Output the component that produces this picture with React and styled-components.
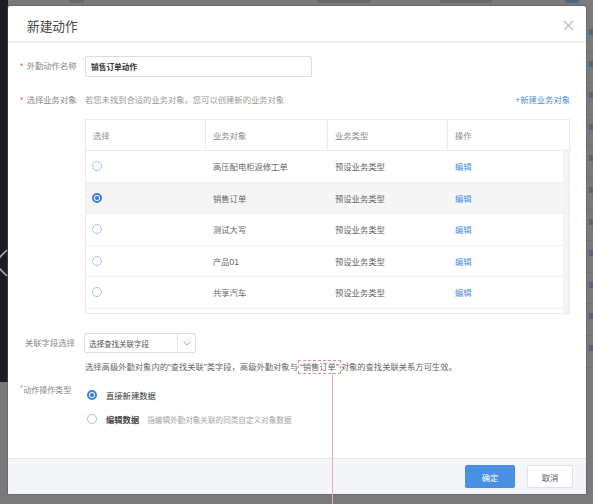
import React from "react";
import styled, { createGlobalStyle } from "styled-components";

const GlobalStyle = createGlobalStyle`
  html, body {
    margin: 0;
    padding: 0;
    background: #7a7a7a;
    font-family: "Liberation Sans", "Noto Sans CJK SC", sans-serif;
  }
  * {
    box-sizing: border-box;
  }
`;

const rows = [
  { name: "高压配电柜返修工单", type: "预设业务类型", checked: false },
  { name: "销售订单", type: "预设业务类型", checked: true },
  { name: "测试大写", type: "预设业务类型", checked: false },
  { name: "产品01", type: "预设业务类型", checked: false },
  { name: "共享汽车", type: "预设业务类型", checked: false },
  { name: "", type: "", checked: false },
];

// faint bits of the page behind the overlay
const bgTop = [
  { left: 70, width: 14 },
  { left: 318, width: 52 },
  { left: 440, width: 52 },
  { left: 565, width: 14, blue: true },
];
const bgLinks = Array.from({ length: 11 });

function App() {
  return (
    <>
      <GlobalStyle />
      <Page>
        <BgSidebar />
        <BgArrow width="14" height="30" viewBox="0 0 14 30">
          <polyline points="13,1 0,14 13,27" fill="none" stroke="#a9a9a9" strokeWidth="1.6" />
        </BgArrow>
        <BgTopRow>
          {bgTop.map((b, i) => (
            <BgTopBit key={i} $left={b.left} $width={b.width} $blue={b.blue} />
          ))}
        </BgTopRow>
        <BgRightColumn>
          {bgLinks.map((_, i) => (
            <BgLinkRow key={i}>
              <BgLinkBit />
            </BgLinkRow>
          ))}
        </BgRightColumn>

        <Modal>
          <Header>
            <Title>新建动作</Title>
            <CloseIcon width="11" height="11" viewBox="0 0 11 11">
              <path d="M1 1 L10 10 M10 1 L1 10" stroke="#b9b9b9" strokeWidth="1.1" />
            </CloseIcon>
          </Header>

          <Body>
            <FormRow $top={13}>
              <Label>
                <Star>*</Star>外勤动作名称
              </Label>
              <NameInput>销售订单动作</NameInput>
            </FormRow>

            <FormRow $top={17}>
              <Label>
                <Star>*</Star>选择业务对象
              </Label>
              <Hint>若您未找到合适的业务对象，您可以创建新的业务对象</Hint>
              <AddLink>+新建业务对象</AddLink>
            </FormRow>

            <Table>
              <HeaderRow>
                <HeaderCell>选择</HeaderCell>
                <HeaderCell>业务对象</HeaderCell>
                <HeaderCell>业务类型</HeaderCell>
                <HeaderCell $last>操作</HeaderCell>
              </HeaderRow>
              <TableBody>
                <Rows>
                  {rows.map((r, i) => (
                    <Row key={i} $active={r.checked}>
                      <Cell>{r.name && <Radio $checked={r.checked} />}</Cell>
                      <Cell>{r.name}</Cell>
                      <Cell>{r.type}</Cell>
                      <Cell>{r.name && <EditLink>编辑</EditLink>}</Cell>
                    </Row>
                  ))}
                </Rows>
                <ScrollTrack />
              </TableBody>
            </Table>

            <FormRow $top={19}>
              <Label $plain>关联字段选择</Label>
              <Select>
                <SelectText>选择查找关联字段</SelectText>
                <SelectArrow>
                  <svg width="8" height="5" viewBox="0 0 8 5">
                    <polyline points="0.5,0.5 4,4 7.5,0.5" fill="none" stroke="#9a9a9a" strokeWidth="0.9" />
                  </svg>
                </SelectArrow>
              </Select>
            </FormRow>

            <HelpText>
              选择高级外勤对象内的“查找关联”类字段，高级外勤对象与
              <Marked>
                “销售订单”
                <RedLine />
              </Marked>
              对象的查找关联关系方可生效。
            </HelpText>

            <TypeRow>
              <TypeLabel>
                <SupStar>*</SupStar>动作操作类型
              </TypeLabel>
              <Options>
                <Option>
                  <Radio $checked />
                  <OptionText>直接新建数据</OptionText>
                </Option>
                <Option>
                  <Radio />
                  <OptionText $strong>编辑数据</OptionText>
                  <OptionHint>指编辑外勤对象关联的同类自定义对象数据</OptionHint>
                </Option>
              </Options>
            </TypeRow>
          </Body>

          <Footer>
            <Button $primary>确定</Button>
            <Button>取消</Button>
          </Footer>
        </Modal>
      </Page>
    </>
  );
}

export default App;

const Page = styled.div`
  position: relative;
  width: 593px;
  height: 504px;
  overflow: hidden;
  background: #7a7a7a;
  padding: 6px 7px 10px 8px;
`;

const BgSidebar = styled.div`
  position: absolute;
  left: 0;
  top: 0;
  width: 8px;
  height: 382px;
  background: #1c1d24;
`;

const BgArrow = styled.svg`
  position: absolute;
  left: -6px;
  top: 249px;
`;

const BgTopRow = styled.div`
  position: absolute;
  left: 0;
  top: 0;
  width: 100%;
  height: 6px;
`;

const BgTopBit = styled.span`
  position: absolute;
  left: ${(p) => p.$left}px;
  top: 0;
  width: ${(p) => p.$width}px;
  height: 3px;
  border-radius: 1px;
  background: ${(p) => (p.$blue ? "#4e6784" : "#686868")};
`;

const BgRightColumn = styled.div`
  position: absolute;
  left: 586px;
  top: 20px;
  width: 7px;
  display: flex;
  flex-direction: column;
`;

const BgLinkRow = styled.div`
  height: 31.6px;
  padding: 9px 0 0 3px;
  border-bottom: 1px solid #727272;
`;

const BgLinkBit = styled.div`
  width: 4px;
  height: 6px;
  background: #4e6784;
`;

const Modal = styled.div`
  position: relative;
  z-index: 1;
  height: 488px;
  background: #fff;
  border-radius: 2px;
  display: flex;
  flex-direction: column;
  box-shadow: 0 0 0 1px rgba(90, 90, 90, 0.5);
`;

const Header = styled.div`
  height: 37px;
  flex: none;
  display: flex;
  align-items: center;
  justify-content: space-between;
  padding: 3px 12px 0 19px;
  border-bottom: 2px solid #f1f1f3;
`;

const Title = styled.div`
  font-size: 12.7px;
  color: #444;
  font-family: "Noto Sans CJK SC", sans-serif;
`;

const CloseIcon = styled.svg`
  display: block;
  margin-top: 1px;
`;

const Body = styled.div`
  flex: 1;
  padding-right: 16px;
  display: flex;
  flex-direction: column;
  font-family: "Liberation Sans", "Noto Sans CJK SC", sans-serif;
  font-size: 8.3px;
`;

const FormRow = styled.div`
  display: flex;
  align-items: center;
  margin-top: ${(p) => p.$top}px;
`;

const Label = styled.div`
  width: 77px;
  flex: none;
  display: flex;
  align-items: center;
  padding-left: ${(p) => (p.$plain ? 17 : 12)}px;
  color: #888;
  font-size: 8.3px;
  line-height: 13px;
  white-space: nowrap;
`;

const Star = styled.span`
  color: #f0595b;
  width: 6.7px;
  flex: none;
`;

const NameInput = styled.div`
  width: 227px;
  height: 21px;
  border: 1px solid #dedede;
  border-radius: 2px;
  padding-left: 5px;
  display: flex;
  align-items: center;
  font-size: 7.7px;
  font-weight: bold;
  color: #333;
`;

const Hint = styled.span`
  color: #999;
  line-height: 13px;
`;

const AddLink = styled.span`
  margin-left: auto;
  color: #4a8fe0;
  line-height: 13px;
`;

const Table = styled.div`
  margin: 12px 0 0 77px;
  height: 195px;
  border: 1px solid #ececec;
  display: flex;
  flex-direction: column;
  overflow: hidden;
`;

const HeaderRow = styled.div`
  height: 31px;
  flex: none;
  display: grid;
  grid-template-columns: 120px 122px 120px 1fr;
  border-bottom: 1px solid #ececec;
`;

const HeaderCell = styled.div`
  display: flex;
  align-items: center;
  padding-left: 7px;
  color: #8a8a8a;
  border-right: ${(p) => (p.$last ? "none" : "1px solid #ececec")};
`;

const TableBody = styled.div`
  flex: 1;
  display: flex;
  overflow: hidden;
`;

const Rows = styled.div`
  flex: 1;
  display: flex;
  flex-direction: column;
`;

const Row = styled.div`
  height: 31.5px;
  flex: none;
  display: grid;
  grid-template-columns: 120px 122px 120px 1fr;
  border-bottom: 1px solid #efefef;
  background: ${(p) => (p.$active ? "#f5f5f5" : "#fff")};
`;

const Cell = styled.div`
  display: flex;
  align-items: center;
  padding-left: 7px;
  color: #666;
  white-space: nowrap;
  &:first-child {
    padding-left: 6px;
  }
`;

const ScrollTrack = styled.div`
  width: 6px;
  flex: none;
  background: #f3f3f3;
`;

const EditLink = styled.span`
  color: #4a8fe0;
`;

const Radio = styled.span`
  position: relative;
  display: inline-block;
  width: 10px;
  height: 10px;
  flex: none;
  border-radius: 50%;
  background: #fff;
  border: ${(p) => (p.$checked ? "2px solid #3a80dc" : "1px solid #a3c6f0")};
  &::after {
    content: "";
    display: ${(p) => (p.$checked ? "block" : "none")};
    position: absolute;
    left: 50%;
    top: 50%;
    width: 3.5px;
    height: 3.5px;
    margin: -1.75px 0 0 -1.75px;
    border-radius: 50%;
    background: #3a80dc;
  }
`;

const Select = styled.div`
  width: 112px;
  height: 20px;
  margin-left: -1px;
  border: 1px solid #dedede;
  border-radius: 2px;
  display: flex;
`;

const SelectText = styled.div`
  flex: 1;
  display: flex;
  align-items: center;
  padding-left: 4px;
  font-size: 7.5px;
  color: #555;
`;

const SelectArrow = styled.div`
  width: 18px;
  flex: none;
  display: flex;
  align-items: center;
  justify-content: center;
  border-left: 1px solid #e2e2e2;
`;

const HelpText = styled.div`
  margin: 7px 0 0 77px;
  line-height: 14px;
  color: #666;
  white-space: nowrap;
`;

const Marked = styled.span`
  position: relative;
  display: inline-block;
  border: 1px dashed #f08c8c;
  line-height: 12px;
  padding: 0 1px;
`;

const RedLine = styled.span`
  position: absolute;
  left: 33px;
  top: 100%;
  width: 1px;
  height: 150px;
  background: #f4aaaa;
`;

const TypeRow = styled.div`
  display: flex;
  align-items: flex-start;
  margin-top: 9px;
`;

const TypeLabel = styled.div`
  width: 77px;
  flex: none;
  padding-left: 12px;
  line-height: 16px;
  color: #888;
  font-size: 8px;
  white-space: nowrap;
`;

const SupStar = styled.span`
  color: #f0595b;
  font-size: 7px;
  vertical-align: top;
  line-height: 10px;
  margin-right: 0.5px;
`;

const Options = styled.div`
  display: flex;
  flex-direction: column;
`;

const Option = styled.div`
  height: 24px;
  display: flex;
  align-items: center;
  padding-left: 2px;
`;

const OptionText = styled.span`
  margin-left: 9px;
  color: ${(p) => (p.$strong ? "#444" : "#333")};
  font-weight: ${(p) => (p.$strong ? "bold" : "normal")};
`;

const OptionHint = styled.span`
  margin-left: 8px;
  font-size: 7.6px;
  color: #a5a5a5;
`;

const Footer = styled.div`
  height: 36px;
  flex: none;
  display: flex;
  align-items: center;
  justify-content: flex-end;
  gap: 12px;
  padding-right: 13px;
  background: #f4f5f9;
  border-top: 1px solid #e7e8ee;
  font-family: "Liberation Sans", "Noto Sans CJK SC", sans-serif;
`;

const Button = styled.div`
  width: ${(p) => (p.$primary ? 50 : 46)}px;
  height: 23px;
  display: flex;
  align-items: center;
  justify-content: center;
  border-radius: 2px;
  font-size: 8.3px;
  background: ${(p) => (p.$primary ? "#4a90e2" : "#fff")};
  color: ${(p) => (p.$primary ? "#fff" : "#555")};
  border: 1px solid ${(p) => (p.$primary ? "#4a90e2" : "#e0e2e7")};
`;
